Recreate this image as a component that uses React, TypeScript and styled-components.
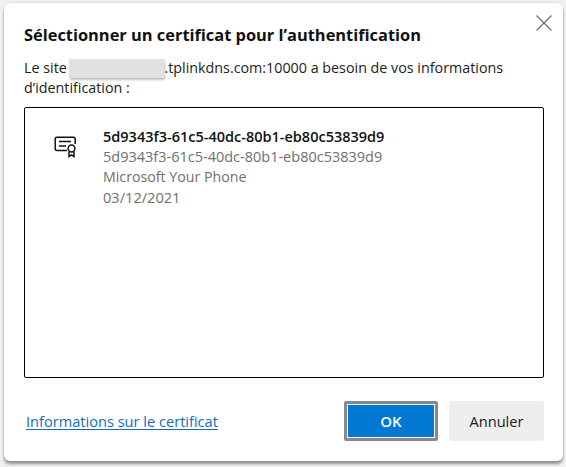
import React from 'react';
import styled, { createGlobalStyle } from 'styled-components';

const GlobalStyle = createGlobalStyle`
  html, body { margin: 0; padding: 0; background: #ececec; }
  body { font-family: "Open Sans", "Noto Sans", sans-serif; width: 566px; height: 467px; overflow: hidden; }
`;

const Backdrop = styled.div`
  width: 566px;
  height: 467px;
  box-sizing: border-box;
  padding: 3px 3px 6px 4px;
  background: #f1f1f1;
`;

const Dialog = styled.div`
  position: relative;
  box-sizing: border-box;
  width: 559px;
  height: 458px;
  padding: 21px 19px 20px 20px;
  background: #fff;
  border-radius: 6px;
  box-shadow: 0 3px 3px rgba(0, 0, 0, 0.4), 0 -1px 2px rgba(0, 0, 0, 0.08);
  display: flex;
  flex-direction: column;
`;

const CloseButton = styled.button`
  position: absolute;
  top: 12px;
  right: 11px;
  width: 16px;
  height: 16px;
  padding: 0;
  border: 0;
  background: none;
  color: #666;
  svg { display: block; }
`;

const Title = styled.h1`
  margin: 0;
  font-size: 16.4px;
  line-height: 22px;
  font-weight: 700;
  color: #111;
  letter-spacing: 0;
`;

const Message = styled.p`
  margin: 12px 0 0;
  font-size: 14.3px;
  line-height: 20px;
  color: #222;
`;

const Redaction = styled.span`
  display: inline-block;
  width: 95px;
  height: 19px;
  margin-left: -1px;
  vertical-align: -5px;
  background: #e1e1e1;
  box-shadow: 1px 2px 2px rgba(0, 0, 0, 0.25);
`;

const CertList = styled.div`
  flex: 1;
  margin-top: 9px;
  padding: 19px 0 0 29px;
  border: 1px solid #000;
  border-radius: 2px;
  display: flex;
  gap: 25px;
`;

const CertIcon = styled.svg`
  width: 24px;
  height: 22px;
  margin-top: 9px;
  flex-shrink: 0;
`;

const CertText = styled.div`
  display: flex;
  flex-direction: column;
`;

const CertLine = styled.div<{ $primary?: boolean; $size?: number }>`
  font-size: ${(p) => p.$size ?? 14.5}px;
  line-height: 20px;
  color: ${(p) => (p.$primary ? '#111' : '#6f6f6f')};
  font-weight: ${(p) => (p.$primary ? 600 : 400)};
`;

const Footer = styled.div`
  margin-top: 23px;
  display: flex;
  align-items: center;
  justify-content: space-between;
  padding-left: 2px;
`;

const InfoLink = styled.a`
  font-size: 14.6px;
  color: #0f6cbd;
  text-decoration: underline;
  text-underline-offset: 2px;
`;

const Actions = styled.div`
  display: flex;
  gap: 11px;
`;

const Button = styled.button<{ $primary?: boolean }>`
  box-sizing: border-box;
  width: ${(p) => (p.$primary ? 94 : 95)}px;
  height: 40px;
  padding: 0;
  font-family: inherit;
  font-size: ${(p) => (p.$primary ? 15 : 14.6)}px;
  font-weight: ${(p) => (p.$primary ? 600 : 500)};
  border-radius: 2px;
  color: ${(p) => (p.$primary ? '#fff' : '#1a1a1a')};
  background: ${(p) => (p.$primary ? '#0078d4' : '#eeeeee')};
  border: ${(p) => (p.$primary ? '3px solid #868a8e' : '0')};
  box-shadow: ${(p) => (p.$primary ? 'inset 0 0 0 1px #fff' : 'none')};
`;

export default function App() {
  return (
    <>
      <GlobalStyle />
      <Backdrop>
        <Dialog>
          <CloseButton aria-label="Fermer">
            <svg width="16" height="16" viewBox="0 0 16 16" fill="none" stroke="currentColor" strokeWidth="1.1">
              <path d="M0.5 0.5 L15.5 15.5 M15.5 0.5 L0.5 15.5" />
            </svg>
          </CloseButton>
          <Title>Sélectionner un certificat pour l’authentification</Title>
          <Message>
            Le site <Redaction />.tplinkdns.com:10000 a besoin de vos informations d’identification :
          </Message>
          <CertList>
            <CertIcon viewBox="0 0 24 22" fill="none" stroke="#111" strokeWidth="1.5">
              <path d="M13 14.5 H3 Q1.2 14.5 1.2 12.8 V3 Q1.2 1.2 3 1.2 H19.5 Q21.2 1.2 21.2 3 V8" />
              <path d="M5 5.5 H17 M5 10 H12" />
              <circle cx="17.5" cy="12.5" r="3.4" />
              <path d="M15 15.5 V20.5 L17.5 18.8 L20 20.5 V15.5" />
            </CertIcon>
            <CertText>
              <CertLine $primary>5d9343f3-61c5-40dc-80b1-eb80c53839d9</CertLine>
              <CertLine>5d9343f3-61c5-40dc-80b1-eb80c53839d9</CertLine>
              <CertLine $size={14.2}>Microsoft Your Phone</CertLine>
              <CertLine $size={14.6}>03/12/2021</CertLine>
            </CertText>
          </CertList>
          <Footer>
            <InfoLink href="#">Informations sur le certificat</InfoLink>
            <Actions>
              <Button $primary>OK</Button>
              <Button>Annuler</Button>
            </Actions>
          </Footer>
        </Dialog>
      </Backdrop>
    </>
  );
}
